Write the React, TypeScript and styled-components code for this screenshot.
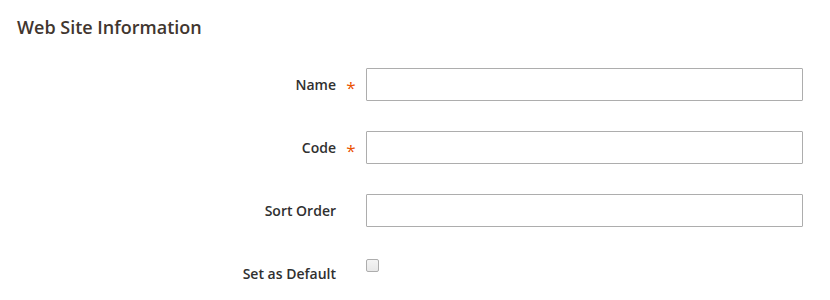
import React from "react";
import styled, { createGlobalStyle } from "styled-components";

const Global = createGlobalStyle`
  html, body { margin: 0; padding: 0; background: #ffffff; }
  body { font-family: "Open Sans", "Noto Sans", sans-serif; }
`;

const Page = styled.div`
  width: 830px;
  height: 300px;
  box-sizing: border-box;
  padding: 12px 0 0 17px;
  overflow: hidden;
`;

const Legend = styled.h2`
  margin: 0 0 26px;
  font-size: 18px;
  line-height: 30px;
  font-weight: 600;
  color: #41362f;
`;

const Form = styled.div`
  display: grid;
  grid-template-columns: 319px 30px 437px;
  row-gap: 30px;
  align-items: start;
`;

const Label = styled.label`
  grid-column: 1;
  text-align: right;
  font-size: 14px;
  font-weight: 600;
  line-height: 33px;
  color: #303030;
`;

const Required = styled.span`
  grid-column: 2;
  height: 33px;
  display: flex;
  justify-content: center;
  align-items: center;
  padding-top: 5px;
  box-sizing: border-box;
  font-size: 17px;
  font-weight: 500;
  line-height: 1;
  color: #eb5202;
`;

const Input = styled.input`
  grid-column: 3;
  box-sizing: border-box;
  width: 437px;
  height: 33px;
  margin: 0;
  border: 1px solid #adadad;
  border-radius: 1px;
  background: #fff;
  font-family: inherit;
  font-size: 14px;
  padding: 0 10px;
  outline: none;
`;

const Checkbox = styled.span`
  grid-column: 3;
  display: block;
  width: 13px;
  height: 13px;
  margin-top: 2px;
  box-sizing: border-box;
  border: 1px solid #adadad;
  border-radius: 2px;
  background: linear-gradient(#f4f4f4, #e8e8e8);
`;

type Field = { label: string; required?: boolean; kind: "text" | "check" };

const fields: Field[] = [
  { label: "Name", required: true, kind: "text" },
  { label: "Code", required: true, kind: "text" },
  { label: "Sort Order", kind: "text" },
  { label: "Set as Default", kind: "check" },
];

export default function App() {
  return (
    <>
      <Global />
      <Page>
        <Legend>Web Site Information</Legend>
        <Form>
          {fields.map((f) => (
            <React.Fragment key={f.label}>
              <Label>{f.label}</Label>
              {f.required ? <Required>*</Required> : <span />}
              {f.kind === "text" ? <Input type="text" /> : <Checkbox />}
            </React.Fragment>
          ))}
        </Form>
      </Page>
    </>
  );
}
